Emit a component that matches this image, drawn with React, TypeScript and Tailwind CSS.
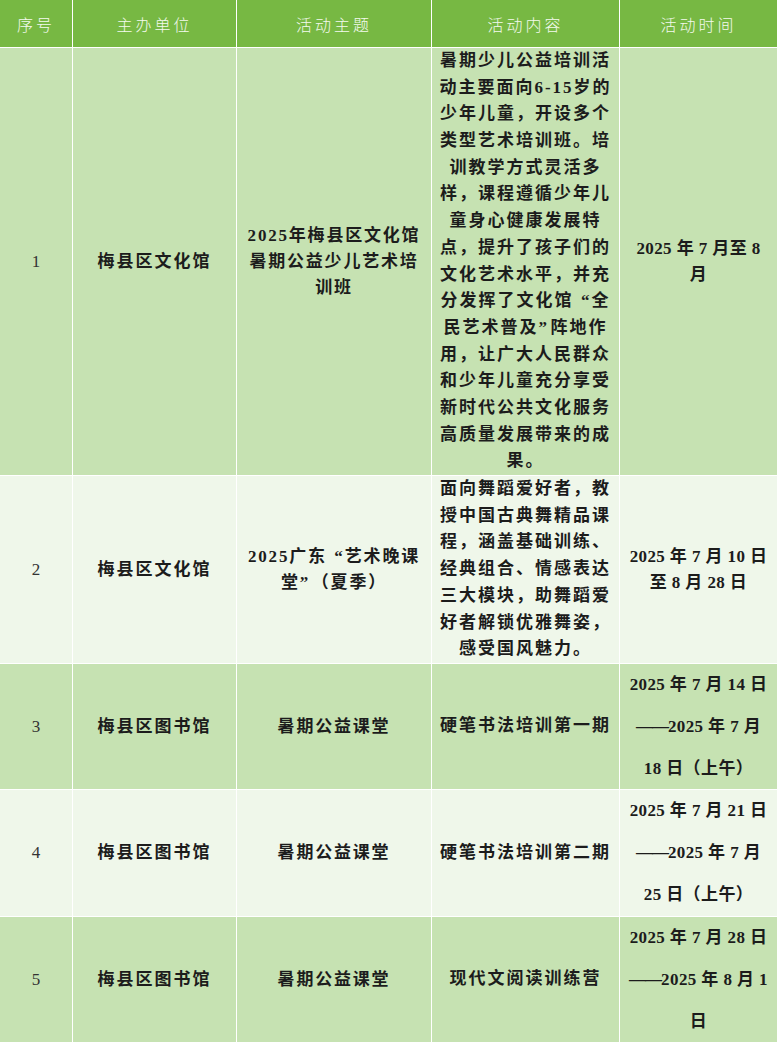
import React from "react";

type Row = {
  no: string;
  org: string;
  theme: string[];
  content: string[];
  time: string[];
  height: string;
  bg: string;
  timeLeading: string;
};

const rows: Row[] = [
  {
    no: "1",
    org: "梅县区文化馆",
    theme: ["2025年梅县区文化馆", "暑期公益少儿艺术培", "训班"],
    content: [
      "暑期少儿公益培训活",
      "动主要面向6-15岁的",
      "少年儿童，开设多个",
      "类型艺术培训班。培",
      "训教学方式灵活多",
      "样，课程遵循少年儿",
      "童身心健康发展特",
      "点，提升了孩子们的",
      "文化艺术水平，并充",
      "分发挥了文化馆“全",
      "民艺术普及”阵地作",
      "用，让广大人民群众",
      "和少年儿童充分享受",
      "新时代公共文化服务",
      "高质量发展带来的成",
      "果。",
    ],
    time: ["2025 年 7 月至 8", "月"],
    height: "h-[428px]",
    bg: "bg-[#c6e2b2]",
    timeLeading: "leading-[26px]",
  },
  {
    no: "2",
    org: "梅县区文化馆",
    theme: ["2025广东“艺术晚课", "堂”（夏季）"],
    content: [
      "面向舞蹈爱好者，教",
      "授中国古典舞精品课",
      "程，涵盖基础训练、",
      "经典组合、情感表达",
      "三大模块，助舞蹈爱",
      "好者解锁优雅舞姿，",
      "感受国风魅力。",
    ],
    time: ["2025 年 7 月 10 日", "至 8 月 28 日"],
    height: "h-[188px]",
    bg: "bg-[#eff7ea]",
    timeLeading: "leading-[26px]",
  },
  {
    no: "3",
    org: "梅县区图书馆",
    theme: ["暑期公益课堂"],
    content: ["硬笔书法培训第一期"],
    time: ["2025 年 7 月 14 日", "——2025 年 7 月", "18 日（上午）"],
    height: "h-[126px]",
    bg: "bg-[#c6e2b2]",
    timeLeading: "leading-[42px]",
  },
  {
    no: "4",
    org: "梅县区图书馆",
    theme: ["暑期公益课堂"],
    content: ["硬笔书法培训第二期"],
    time: ["2025 年 7 月 21 日", "——2025 年 7 月", "25 日（上午）"],
    height: "h-[127px]",
    bg: "bg-[#eff7ea]",
    timeLeading: "leading-[42px]",
  },
  {
    no: "5",
    org: "梅县区图书馆",
    theme: ["暑期公益课堂"],
    content: ["现代文阅读训练营"],
    time: ["2025 年 7 月 28 日", "——2025 年 8 月 1", "日"],
    height: "h-[126px]",
    bg: "bg-[#c6e2b2]",
    timeLeading: "leading-[42px]",
  },
];

const headers = ["序号", "主办单位", "活动主题", "活动内容", "活动时间"];

const serif = "font-['Liberation_Serif','Noto_Sans_CJK_SC',serif]";

// wider quotes and unbroken dashes, like the Word table
function renderLine(line: string) {
  const parts = line.split(/(“|”|——)/);
  return parts.map((p, i) => {
    if (p === "“")
      return (
        <span key={i} className="inline-block w-[16px] text-right tracking-normal mr-[2px]">
          “
        </span>
      );
    if (p === "”")
      return (
        <span key={i} className="inline-block w-[12px] text-left tracking-normal">
          ”
        </span>
      );
    if (p === "——")
      return (
        <span key={i} className="tracking-[-1px]">
          ——
        </span>
      );
    return <React.Fragment key={i}>{p}</React.Fragment>;
  });
}

function Lines({ lines, className }: { lines: string[]; className: string }) {
  return (
    <div className={`flex flex-col items-center ${className}`}>
      {lines.map((l, i) => (
        <span key={i} className="whitespace-nowrap">
          {renderLine(l)}
        </span>
      ))}
    </div>
  );
}

export default function App() {
  return (
    <div className="w-[778px] overflow-hidden bg-white">
      <div className="grid grid-cols-[73px_164px_195px_188px_158px]">
        {headers.map((h) => (
          <div
            key={h}
            className="h-[48px] flex items-center justify-center bg-[#77b843] border-r border-b border-white text-[16px] font-light tracking-[3px] text-[#f4faee] font-['Noto_Sans_CJK_SC',sans-serif]"
          >
            {h}
          </div>
        ))}

        {rows.map((r) => (
          <React.Fragment key={r.no}>
            <div
              className={`${r.height} ${r.bg} flex items-center justify-center border-r border-b border-white text-[17px] text-[#333] ${serif}`}
            >
              {r.no}
            </div>
            <div
              className={`${r.height} ${r.bg} flex items-center justify-center border-r border-b border-white text-[17px] font-bold tracking-[2px] text-[#1c1c1c] ${serif}`}
            >
              {r.org}
            </div>
            <div
              className={`${r.height} ${r.bg} flex items-center justify-center border-r border-b border-white`}
            >
              <Lines
                lines={r.theme}
                className={`text-[17px] font-bold tracking-[1.8px] leading-[26px] text-[#1c1c1c] ${serif}`}
              />
            </div>
            <div
              className={`${r.height} ${r.bg} flex items-center justify-center border-r border-b border-white`}
            >
              <Lines
                lines={r.content}
                className={`text-[17px] font-bold tracking-[2px] leading-[26.7px] text-[#1c1c1c] ${serif}`}
              />
            </div>
            <div
              className={`${r.height} ${r.bg} flex items-center justify-center border-r border-b border-white`}
            >
              <Lines
                lines={r.time}
                className={`text-[17px] font-bold tracking-[0.4px] ${r.timeLeading} text-[#1c1c1c] ${serif}`}
              />
            </div>
          </React.Fragment>
        ))}
      </div>
    </div>
  );
}
